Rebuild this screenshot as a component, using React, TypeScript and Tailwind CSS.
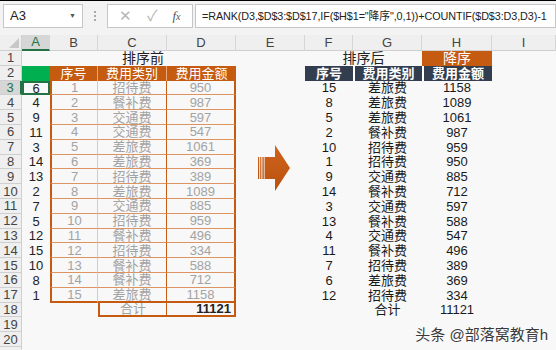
import React from "react";

const left = [
  [1, "招待费", 950],
  [2, "餐补费", 987],
  [3, "交通费", 597],
  [4, "交通费", 547],
  [5, "差旅费", 1061],
  [6, "差旅费", 369],
  [7, "招待费", 389],
  [8, "差旅费", 1089],
  [9, "交通费", 885],
  [10, "招待费", 959],
  [11, "餐补费", 496],
  [12, "招待费", 334],
  [13, "餐补费", 588],
  [14, "餐补费", 712],
  [15, "差旅费", 1158],
];
const colA = [6, 4, 9, 11, 3, 14, 13, 2, 7, 5, 12, 15, 10, 8, 1];
const right = [
  [15, "差旅费", 1158],
  [8, "差旅费", 1089],
  [5, "差旅费", 1061],
  [2, "餐补费", 987],
  [10, "招待费", 959],
  [1, "招待费", 950],
  [9, "交通费", 885],
  [14, "餐补费", 712],
  [3, "交通费", 597],
  [13, "餐补费", 588],
  [4, "交通费", 547],
  [11, "餐补费", 496],
  [7, "招待费", 389],
  [6, "差旅费", 369],
  [12, "招待费", 334],
];

const cell = "h-[14.8px] flex items-center justify-center leading-none overflow-hidden whitespace-nowrap";

const RowHead = ({ n, active }: { n?: number; active?: boolean }) => (
  <div
    className={`${cell} border-b border-r border-[#cfcfcf] text-[13px] ${
      active ? "bg-[#d6d6d6] text-[#217346] border-r-2 border-r-[#217346]" : "bg-[#efefef] text-[#444]"
    }`}
  >
    {n}
  </div>
);

export default function App() {
  const cols = ["A", "B", "C", "D", "E", "F", "G", "H", "I"];
  return (
    <div
      className="relative w-[556px] h-[350px] overflow-hidden bg-[#f8f8f8] text-[13px]"
      style={{ fontFamily: '"Liberation Sans", "Noto Sans CJK SC", sans-serif' }}
    >
      {/* toolbar */}
      <div className="h-[35px] bg-[#f3f3f3] border-t border-black flex items-start pt-[3px]">
        <div className="ml-[3px] w-[80px] h-[24px] bg-white border border-[#c6c6c6] flex items-center justify-between px-[6px] text-[#222]">
          <span>A3</span>
          <span className="text-[7px] text-[#555]">▼</span>
        </div>
        <div className="w-[24px] h-[24px] flex flex-col items-center justify-center gap-[2px]">
          <span className="w-[2px] h-[2px] bg-[#aaa]" />
          <span className="w-[2px] h-[2px] bg-[#aaa]" />
          <span className="w-[2px] h-[2px] bg-[#aaa]" />
        </div>
        <div className="w-[86px] h-[24px] bg-white border border-[#c6c6c6] flex items-center justify-around px-[4px] text-[#b5b5b5]">
          <span className="text-[15px]">✕</span>
          <span className="text-[15px]">✓</span>
          <span className="text-[#555] italic text-[13px]" style={{ fontFamily: '"Liberation Serif", serif' }}>
            f<span className="text-[10px]">x</span>
          </span>
        </div>
        <div className="ml-[2px] flex-1 h-[24px] bg-white border border-[#c6c6c6] flex items-center pl-[6px] text-[10.8px] tracking-[-0.1px] text-[#222] whitespace-nowrap overflow-hidden">
          =RANK(D3,$D$3:$D$17,IF($H$1="降序",0,1))+COUNTIF($D$3:D3,D3)-1
        </div>
      </div>

      {/* grid */}
      <div className="grid grid-cols-[22px_28px_48px_69px_69px_69px_48px_69px_70px_64px]">
        {/* column headers */}
        <div className="h-[16px] bg-[#efefef] border-b border-r border-[#cfcfcf] flex items-end justify-end p-[2px]">
          <div className="w-0 h-0 border-l-[10px] border-l-transparent border-b-[10px] border-b-[#c8c8c8]" />
        </div>
        {cols.map((c) => (
          <div
            key={c}
            className={`h-[16px] flex items-center justify-center border-r border-[#d6d6d6] text-[13px] ${
              c === "A"
                ? "bg-[#d6d6d6] text-[#217346] border-b-2 border-b-[#217346]"
                : "bg-[#efefef] text-[#444] border-b border-b-[#cfcfcf]"
            }`}
          >
            {c}
          </div>
        ))}

        {/* row 1 */}
        <RowHead n={1} />
        <div className={cell} />
        <div className={`${cell} col-span-3 text-[#222] text-[14px]`}>排序前</div>
        <div className={cell} />
        <div className={`${cell} col-span-2 text-[#222] text-[14px]`}>排序后</div>
        <div className={`${cell} bg-[#c55a11] text-white text-[14px]`}>降序</div>
        <div className={cell} />

        {/* row 2 */}
        <RowHead n={2} />
        <div className={`${cell} bg-[#00b050]`} />
        <div className={`${cell} bg-[#c55a11] text-white text-[13px] border-r border-[#e9a77a]`}>序号</div>
        <div className={`${cell} bg-[#c55a11] text-white text-[13px] border-r border-[#e9a77a]`}>费用类别</div>
        <div className={`${cell} bg-[#c55a11] text-white text-[13px]`}>费用金额</div>
        <div className={cell} />
        <div className={`${cell} bg-[#323e4f] text-white text-[13px] font-bold`}>序号</div>
        <div className={`${cell} bg-[#323e4f] text-white text-[13px] font-bold border-l-2 border-white`}>费用类别</div>
        <div className={`${cell} bg-[#323e4f] text-white text-[13px] font-bold border-l-2 border-white`}>费用金额</div>
        <div className={cell} />

        {/* data rows */}
        {left.map((r, i) => {
          const last = i === left.length - 1;
          const hb = last ? "border-b-2 border-b-[#c55a11]" : "border-b border-b-[#dc9463]";
          const rr = right[i];
          return (
            <React.Fragment key={i}>
              <RowHead n={i + 3} active={i === 0} />
              <div
                className={`${cell} relative text-[#222] ${
                  i === 0 ? "border-2 border-[#217346]" : ""
                }`}
              >
                {colA[i]}
                {i === 0 && (
                  <span className="absolute right-[-4px] bottom-[-4px] w-[5px] h-[5px] bg-[#217346] border border-white" />
                )}
              </div>
              <div className={`${cell} text-[#a3a3a3] border-l-2 border-l-[#c55a11] border-r border-r-[#f0c4a4] ${hb}`}>
                {r[0]}
              </div>
              <div className={`${cell} text-[#a3a3a3] border-r border-r-[#c55a11] ${hb}`}>{r[1]}</div>
              <div className={`${cell} text-[#a3a3a3] border-r-2 border-r-[#c55a11] ${hb}`}>{r[2]}</div>
              <div className={cell} />
              <div className={`${cell} text-[#1a1a1a]`}>{rr[0]}</div>
              <div className={`${cell} text-[#1a1a1a]`}>{rr[1]}</div>
              <div className={`${cell} text-[#1a1a1a]`}>{rr[2]}</div>
              <div className={cell} />
            </React.Fragment>
          );
        })}

        {/* row 18 */}
        <RowHead n={18} />
        <div className={cell} />
        <div className={cell} />
        <div className={`${cell} text-[#a3a3a3] border-l-2 border-b-2 border-r border-[#c55a11]`}>合计</div>
        <div className={`${cell} justify-end pr-[3px] font-bold text-[#222] border-r-2 border-b-2 border-[#c55a11]`}>
          11121
        </div>
        <div className={cell} />
        <div className={cell} />
        <div className={`${cell} text-[#1a1a1a]`}>合计</div>
        <div className={`${cell} text-[#1a1a1a]`}>11121</div>
        <div className={cell} />

        {[19, 20].map((n) => (
          <React.Fragment key={n}>
            <RowHead n={n} />
            <div className="col-span-9" />
          </React.Fragment>
        ))}
        <RowHead />
        <div className="col-span-9" />
      </div>

      {/* arrow shape */}
      <svg className="absolute left-[258px] top-[145px]" width="33" height="46" viewBox="0 0 33 46">
        <defs>
          <linearGradient id="ag" x1="0" y1="0" x2="0" y2="1">
            <stop offset="0" stopColor="#d0631c" />
            <stop offset="1" stopColor="#b8520f" />
          </linearGradient>
        </defs>
        <rect x="0" y="12" width="1.2" height="22" fill="url(#ag)" />
        <rect x="2.2" y="12" width="1.2" height="22" fill="url(#ag)" />
        <rect x="4.4" y="12" width="1.4" height="22" fill="url(#ag)" />
        <polygon points="6.6,12 17,12 17,0 32,23 17,46 17,34 6.6,34" fill="url(#ag)" />
      </svg>

      {/* watermark */}
      <div
        className="absolute right-[8px] bottom-[4px] text-[15px] text-[#3a3a3a] whitespace-nowrap"
        style={{ textShadow: "0 0 2px #fff, 0 0 2px #fff" }}
      >
        头条 @部落窝教育h
      </div>
    </div>
  );
}
